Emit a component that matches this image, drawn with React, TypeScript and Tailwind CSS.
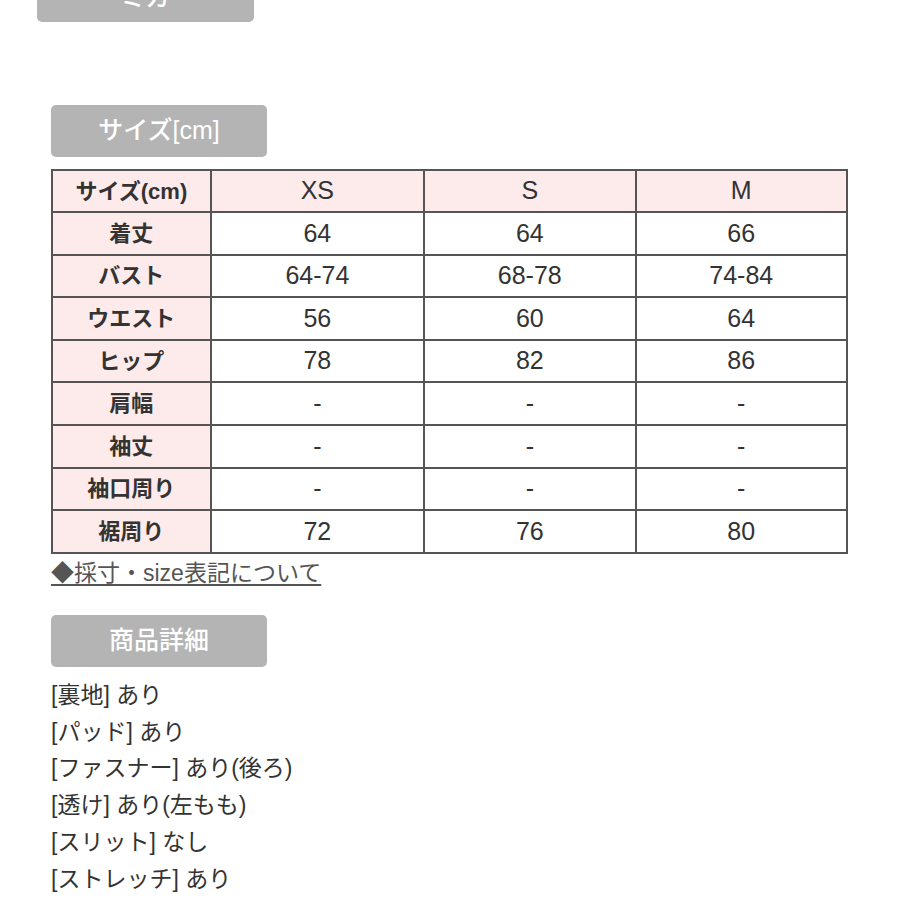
const rows: [string, string, string, string][] = [
  ['着丈', '64', '64', '66'],
  ['バスト', '64-74', '68-78', '74-84'],
  ['ウエスト', '56', '60', '64'],
  ['ヒップ', '78', '82', '86'],
  ['肩幅', '-', '-', '-'],
  ['袖丈', '-', '-', '-'],
  ['袖口周り', '-', '-', '-'],
  ['裾周り', '72', '76', '80'],
]

const details = [
  '[裏地] あり',
  '[パッド] あり',
  '[ファスナー] あり(後ろ)',
  '[透け] あり(左もも)',
  '[スリット] なし',
  '[ストレッチ] あり',
]

function Heading({ children }: { children: React.ReactNode }) {
  return (
    <div className="w-[216px] h-[52px] rounded-[5px] bg-[#b4b4b4] flex items-center justify-center text-white text-[25px] font-medium">
      {children}
    </div>
  )
}

export default function App() {
  return (
    <div className="w-[900px] h-[900px] overflow-hidden bg-white text-[#333] font-['Liberation_Sans','Noto_Sans_CJK_JP',sans-serif]">
      <div className="ml-[37px] w-[217px] h-[52px] -mt-[30px] rounded-[5px] bg-[#b4b4b4] flex items-center justify-center text-white text-[25px] font-medium overflow-hidden">
        <span className="translate-y-[2px]">ミガ</span>
      </div>

      <div className="ml-[51px] mt-[83px]">
        <Heading>サイズ[cm]</Heading>

        <table className="mt-[12px] w-[797px] border-collapse border-2 border-[#555] text-center">
          <colgroup>
            <col className="w-[159px]" />
            <col className="w-[214px]" />
            <col className="w-[212px]" />
            <col className="w-[212px]" />
          </colgroup>
          <thead>
            <tr className="h-[42px] bg-[#fdeaea]">
              <th className="border-2 border-[#555] font-bold text-[22px]">サイズ(cm)</th>
              <th className="border-2 border-[#555] font-normal text-[25px]">XS</th>
              <th className="border-2 border-[#555] font-normal text-[25px]">S</th>
              <th className="border-2 border-[#555] font-normal text-[25px]">M</th>
            </tr>
          </thead>
          <tbody>
            {rows.map(r => (
              <tr key={r[0]} className="h-[42.6px]">
                <td className="border-2 border-[#555] bg-[#fdeaea] font-bold text-[22px]">{r[0]}</td>
                <td className="border-2 border-[#555] text-[25px]">{r[1]}</td>
                <td className="border-2 border-[#555] text-[25px]">{r[2]}</td>
                <td className="border-2 border-[#555] text-[25px]">{r[3]}</td>
              </tr>
            ))}
          </tbody>
        </table>

        <div className="mt-[4px] text-[23px] leading-[30px] text-[#555] underline underline-offset-[3px]">
          ◆採寸・size表記について
        </div>

        <div className="mt-[27px]">
          <Heading>商品詳細</Heading>
        </div>

        <div className="mt-[10px] text-[23px] leading-[36.8px] text-[#333]">
          {details.map(d => (
            <div key={d}>{d}</div>
          ))}
        </div>
      </div>
    </div>
  )
}
